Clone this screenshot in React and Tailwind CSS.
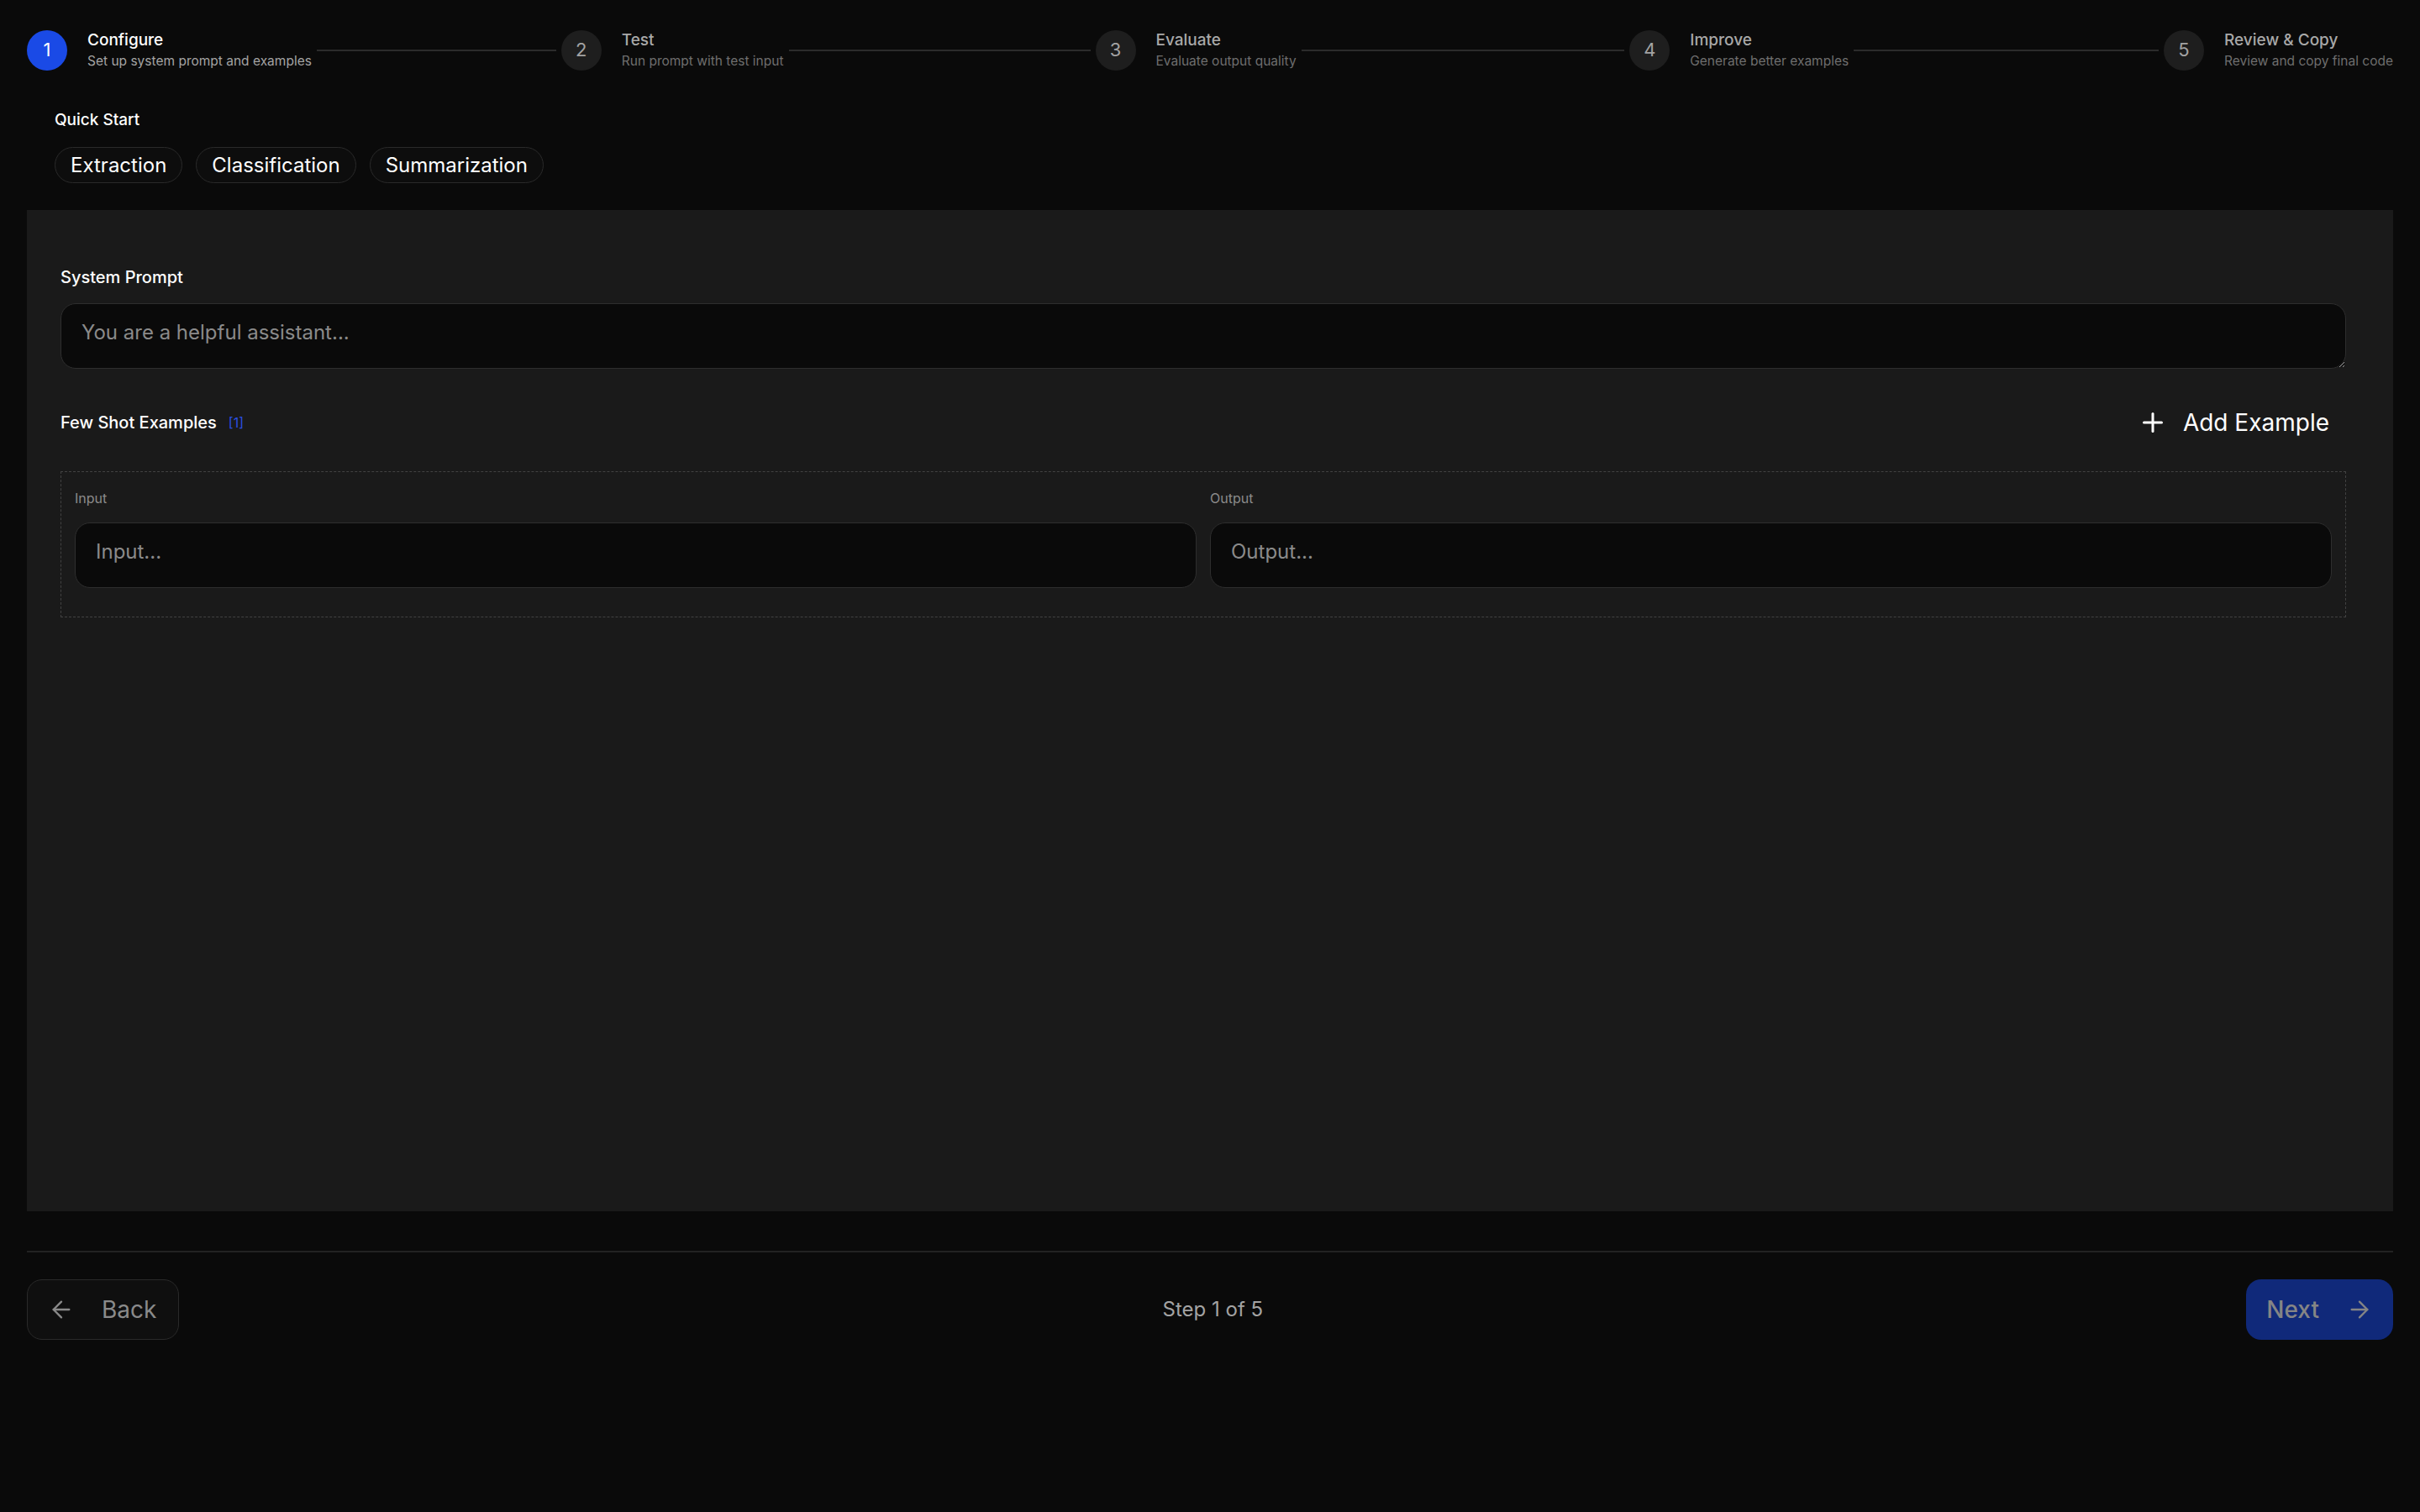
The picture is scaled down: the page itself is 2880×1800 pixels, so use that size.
import { useState } from 'react';
import { Plus, ArrowLeft, ArrowRight } from 'lucide-react';

const STEPS = [
  { title: 'Configure', desc: 'Set up system prompt and examples' },
  { title: 'Test', desc: 'Run prompt with test input' },
  { title: 'Evaluate', desc: 'Evaluate output quality' },
  { title: 'Improve', desc: 'Generate better examples' },
  { title: 'Review & Copy', desc: 'Review and copy final code' },
];

const PRESETS = ['Extraction', 'Classification', 'Summarization'];

function Stepper({ current }) {
  return (
    <div className="flex items-center">
      {STEPS.map((step, i) => {
        const active = i === current;
        return (
          <div key={step.title} className={`flex items-center ${i < STEPS.length - 1 ? 'flex-1' : ''}`}>
            <div className="flex items-center gap-6 shrink-0">
              <div
                className={`w-12 h-12 rounded-full flex items-center justify-center text-[22px] ${
                  active ? 'bg-[#1a4ae6] text-white' : 'bg-[#1e1e1e] text-[#a3a3a3]'
                }`}
              >
                {i + 1}
              </div>
              <div className="flex flex-col">
                <span className={`text-[19px] leading-[26px] font-medium ${active ? 'text-white' : 'text-[#a8a8a8]'}`}>
                  {step.title}
                </span>
                <span className={`text-[15.5px] leading-[22px] mt-[1px] ${active ? 'text-[#a3a3a3]' : 'text-[#6e6e6e]'}`}>
                  {step.desc}
                </span>
              </div>
            </div>
            {i < STEPS.length - 1 && <div className="flex-1 h-[2px] bg-[#2b2b2b] mx-[6px]" />}
          </div>
        );
      })}
    </div>
  );
}

function ExampleCard() {
  return (
    <div className="mt-[34px] border border-dashed border-[#424242] px-4 pt-[19px] pb-[34px] grid grid-cols-2 gap-4">
      {['Input', 'Output'].map(label => (
        <div key={label} className="flex flex-col">
          <span className="text-[16px] leading-6 text-[#8a8a8a] mb-[17px]">{label}</span>
          <textarea
            rows={1}
            placeholder={`${label}...`}
            className="h-[78px] w-full resize-none rounded-[18px] border border-[#2e2e2e] bg-[#0a0a0a] px-6 pt-[16px] text-[24px] leading-9 text-white placeholder:text-[#8a8a8a] outline-none"
          />
        </div>
      ))}
    </div>
  );
}

export default function App() {
  const [step] = useState(0);

  return (
    <div className="min-h-screen bg-[#0a0a0a] font-['Inter',sans-serif] px-8 pt-[35px]">
      <Stepper current={step} />

      {/* Quick start presets */}
      <div className="px-[33px] mt-[46px]">
        <div className="text-[19px] leading-[26px] font-medium text-white mb-[19px]">Quick Start</div>
        <div className="flex gap-4">
          {PRESETS.map(p => (
            <button
              key={p}
              className="h-[43px] px-[18px] rounded-full border border-[#2a2a2a] bg-[#0d0d0d] text-[24px] text-white flex items-center"
            >
              {p}
            </button>
          ))}
        </div>
      </div>

      {/* Configure panel */}
      <div className="mt-8 bg-[#1a1a1a] min-h-[1192px] pl-10 pr-14 pt-[66px]">
        <label className="block text-[20px] leading-7 font-medium text-white mb-[17px]">System Prompt</label>
        <textarea
          rows={1}
          placeholder="You are a helpful assistant..."
          className="block h-[78px] w-full rounded-[18px] border border-[#2e2e2e] bg-[#0a0a0a] px-6 pt-[16px] text-[24px] leading-9 text-white placeholder:text-[#8a8a8a] outline-none"
        />

        <div className="mt-10 h-12 flex items-center justify-between">
          <div className="flex items-center gap-[14px]">
            <span className="text-[20px] font-medium text-white">Few Shot Examples</span>
            <span className="text-[16px] text-[#2a4fe0]">[1]</span>
          </div>
          <button className="flex items-center gap-[18px] px-5 text-[28px] text-white">
            <Plus size={36} strokeWidth={2} />
            Add Example
          </button>
        </div>

        <ExampleCard />
      </div>

      {/* Footer nav */}
      <div className="mt-[47px] border-t-2 border-[#222] pt-8 flex items-center justify-between">
        <button className="h-[72px] flex items-center gap-8 pl-6 pr-[26px] rounded-[18px] border border-[#2a2a2a] bg-[#0f0f0f] text-[28px] text-[#8a8a8a]">
          <ArrowLeft size={32} strokeWidth={1.75} />
          Back
        </button>
        <span className="text-[24px] text-[#a3a3a3]">Step 1 of 5</span>
        <button className="h-[72px] flex items-center gap-8 px-6 rounded-[18px] bg-[#10297a] text-[28px] font-medium text-[#858585]">
          Next
          <ArrowRight size={32} strokeWidth={1.75} />
        </button>
      </div>
    </div>
  );
}
